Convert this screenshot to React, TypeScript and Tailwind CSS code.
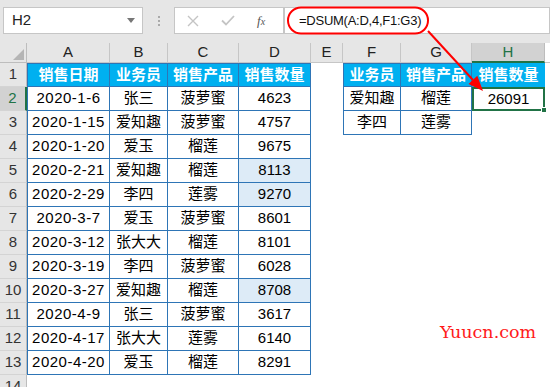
import React from "react";

const rows = [
  ["2020-1-6", "张三", "菠萝蜜", "4623", false],
  ["2020-1-15", "爱知趣", "菠萝蜜", "4757", false],
  ["2020-1-20", "爱玉", "榴莲", "9675", false],
  ["2020-2-21", "爱知趣", "榴莲", "8113", true],
  ["2020-2-29", "李四", "莲雾", "9270", true],
  ["2020-3-7", "爱玉", "菠萝蜜", "8601", false],
  ["2020-3-12", "张大大", "榴莲", "8101", false],
  ["2020-3-19", "李四", "菠萝蜜", "6028", false],
  ["2020-3-27", "爱知趣", "榴莲", "8708", true],
  ["2020-4-9", "张三", "菠萝蜜", "3617", false],
  ["2020-4-17", "张大大", "莲雾", "6140", false],
  ["2020-4-20", "爱玉", "榴莲", "8291", false],
] as const;

const criteria = [
  ["爱知趣", "榴莲"],
  ["李四", "莲雾"],
];

const cols = [
  { k: "A", w: "w-[83px]" },
  { k: "B", w: "w-[58px]" },
  { k: "C", w: "w-[71px]" },
  { k: "D", w: "w-[72px]" },
  { k: "E", w: "w-[32px]" },
  { k: "F", w: "w-[58px]" },
  { k: "G", w: "w-[71px]" },
  { k: "H", w: "w-[73px]" },
];

const cell = "h-[24px] shrink-0 flex items-center justify-center";
const tb = "border-r border-b border-[#2e75b6]";
const hdr = "bg-[#00b0f0] text-white font-bold";

function RowHead({ n, active }: { n: number; active?: boolean }) {
  return (
    <div
      className={
        "h-[24px] w-[27px] shrink-0 flex items-center justify-center border-b border-[#d4d4d4] text-[15px] " +
        (active
          ? "bg-[#d2d2d2] border-r-2 border-r-[#217346] text-[#217346]"
          : "bg-[#e6e6e6] border-r border-r-[#bdbdbd] text-[#333]")
      }
    >
      {n}
    </div>
  );
}

export default function App() {
  return (
    <div className="relative w-[550px] h-[387px] overflow-hidden bg-white text-black font-['Liberation_Sans','Noto_Sans_CJK_SC',sans-serif]">
      {/* formula bar */}
      <div className="h-[43px] bg-[#e6e6e6] flex items-start pt-[7px] pl-[3px]">
        <div className="w-[140px] h-[27px] bg-white border border-[#c6c6c6] flex items-center justify-between pl-[8px] pr-[7px]">
          <span className="text-[15px] text-[#222]">H2</span>
          <svg width="8" height="5" viewBox="0 0 8 5">
            <path d="M0 0h8L4 5z" fill="#777" />
          </svg>
        </div>
        <div className="w-[31px] h-[27px] flex flex-col items-center justify-center gap-[2px]">
          <div className="w-[2px] h-[2px] bg-[#aaa]" />
          <div className="w-[2px] h-[2px] bg-[#aaa]" />
          <div className="w-[2px] h-[2px] bg-[#aaa]" />
        </div>
        <div className="w-[110px] h-[27px] bg-white border border-[#c6c6c6] flex items-center pl-[12px] gap-[22px]">
          <svg width="12" height="12" viewBox="0 0 12 12">
            <path d="M1 1l10 10M11 1L1 11" stroke="#c4c4c4" strokeWidth="1.4" />
          </svg>
          <svg width="14" height="11" viewBox="0 0 14 11">
            <path d="M1 5.5l4 4L13 1" stroke="#c4c4c4" strokeWidth="1.8" fill="none" />
          </svg>
          <span className="text-[13px] italic text-[#555] font-['Liberation_Serif',serif]">
            f<span className="text-[10px]">x</span>
          </span>
        </div>
        <div className="flex-1 h-[27px] bg-white border border-[#c6c6c6] flex items-center pl-[14px] text-[13px] tracking-[-0.25px] text-[#111]">
          =DSUM(A:D,4,F1:G3)
        </div>
      </div>

      {/* column headers */}
      <div className="flex h-[20px] bg-[#e6e6e6]">
        <div className="w-[27px] shrink-0 border-r border-b border-[#bdbdbd] relative">
          <svg className="absolute right-[2px] bottom-[2px]" width="11" height="11" viewBox="0 0 11 11">
            <path d="M11 0v11H0z" fill="#b5b5b5" />
          </svg>
        </div>
        {cols.map((c) => (
          <div
            key={c.k}
            className={
              c.w +
              " shrink-0 flex items-center justify-center text-[15px] " +
              (c.k === "H"
                ? "bg-[#d2d2d2] border-r border-r-[#bdbdbd] border-b-2 border-b-[#217346] text-[#217346]"
                : "border-r border-b border-[#c6c6c6] text-[#222]")
            }
          >
            {c.k}
          </div>
        ))}
        <div className="flex-1 bg-white border-b border-[#c6c6c6]" />
      </div>

      {/* row 1 */}
      <div className="flex text-[15px]">
        <RowHead n={1} />
        <div className={`${cell} w-[83px] ${tb} border-l border-t ${hdr}`}>销售日期</div>
        <div className={`${cell} w-[58px] ${tb} border-t ${hdr}`}>业务员</div>
        <div className={`${cell} w-[71px] ${tb} border-t ${hdr}`}>销售产品</div>
        <div className={`${cell} w-[72px] ${tb} border-t ${hdr}`}>销售数量</div>
        <div className={`${cell} w-[32px]`} />
        <div className={`${cell} w-[58px] ${tb} border-l border-t ${hdr}`}>业务员</div>
        <div className={`${cell} w-[71px] ${tb} border-t ${hdr}`}>销售产品</div>
        <div className={`${cell} w-[73px] ${hdr}`}>销售数量</div>
      </div>

      {rows.map((r, i) => (
        <div key={i} className="flex text-[15px]">
          <RowHead n={i + 2} active={i === 0} />
          <div className={`${cell} w-[83px] ${tb} border-l tracking-[0.5px]`}>{r[0]}</div>
          <div className={`${cell} w-[58px] ${tb}`}>{r[1]}</div>
          <div className={`${cell} w-[71px] ${tb}`}>{r[2]}</div>
          <div className={`${cell} w-[72px] ${tb} ${r[4] ? "bg-[#ddebf7]" : ""}`}>{r[3]}</div>
          <div className={`${cell} w-[32px]`} />
          {i < 2 ? (
            <>
              <div className={`${cell} w-[58px] ${tb} border-l`}>{criteria[i][0]}</div>
              <div className={`${cell} w-[71px] ${tb}`}>{criteria[i][1]}</div>
            </>
          ) : (
            <div className={`${cell} w-[129px]`} />
          )}
          {i === 0 ? (
            <div className={`${cell} w-[73px] relative border-2 border-[#217346]`}>
              26091
              <div className="absolute -right-[4px] -bottom-[4px] w-[6px] h-[6px] bg-[#217346] border border-white" />
            </div>
          ) : (
            <div className={`${cell} w-[73px]`} />
          )}
        </div>
      ))}

      {/* row 14 */}
      <div className="flex">
        <RowHead n={14} />
      </div>

      {/* annotation */}
      <svg className="absolute left-0 top-0 pointer-events-none" width="550" height="387" viewBox="0 0 550 387">
        <rect x="288" y="7.5" width="140" height="26" rx="13" fill="none" stroke="#f00" strokeWidth="2" />
        <path d="M428 31L473 80" stroke="#f00" strokeWidth="2" />
        <path d="M483 91L477.3 75.8L468.5 84z" fill="#f00" />
      </svg>

      <div className="absolute left-[440px] top-[324px] leading-none text-[17.5px] text-[#ff1a1a] font-['DejaVu_Serif',serif]">
        Yuucn.com
      </div>
    </div>
  );
}
